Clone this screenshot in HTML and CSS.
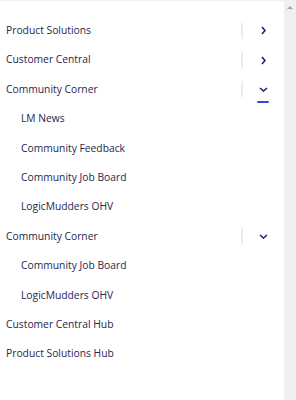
FILE: index.html
```html
<!DOCTYPE html>
<html lang="en">
<head>
    <meta charset="UTF-8">
    <meta name="viewport" content="width=device-width, initial-scale=1.0">
    <title>Menu</title>
    <link rel="stylesheet" href="styles.css">
</head>
<body>
    <div class="page">
        <nav class="menu">
            <div class="item">
                <a href="#" class="label">Product Solutions</a>
                <span class="divider"></span>
                <button class="toggle">
                    <svg width="5" height="9" viewBox="0 0 5 9"><path d="M1 1l3 3.5L1 8" fill="none" stroke="#1e2566" stroke-width="1.6"/></svg>
                </button>
            </div>
            <div class="item">
                <a href="#" class="label">Customer Central</a>
                <span class="divider"></span>
                <button class="toggle">
                    <svg width="5" height="9" viewBox="0 0 5 9"><path d="M1 1l3 3.5L1 8" fill="none" stroke="#1e2566" stroke-width="1.6"/></svg>
                </button>
            </div>
            <div class="item">
                <a href="#" class="label">Community Corner</a>
                <span class="divider"></span>
                <button class="toggle open">
                    <svg width="9" height="5" viewBox="0 0 9 5"><path d="M1 1l3.5 3L8 1" fill="none" stroke="#1e2566" stroke-width="1.6"/></svg>
                </button>
            </div>
            <a href="#" class="sub">LM News</a>
            <a href="#" class="sub">Community Feedback</a>
            <a href="#" class="sub">Community Job Board</a>
            <a href="#" class="sub">LogicMudders OHV</a>
            <div class="item">
                <a href="#" class="label">Community Corner</a>
                <span class="divider"></span>
                <button class="toggle">
                    <svg width="9" height="5" viewBox="0 0 9 5"><path d="M1 1l3.5 3L8 1" fill="none" stroke="#1e2566" stroke-width="1.6"/></svg>
                </button>
            </div>
            <a href="#" class="sub">Community Job Board</a>
            <a href="#" class="sub">LogicMudders OHV</a>
            <div class="item">
                <a href="#" class="label">Customer Central Hub</a>
            </div>
            <div class="item">
                <a href="#" class="label">Product Solutions Hub</a>
            </div>
        </nav>
        <div class="scrollbar">
            <span class="arrow"></span>
        </div>
    </div>
</body>
</html>
```

FILE: styles.css
```css
body {
    margin: 0;
    padding: 0;
    background-color: white;
    font-family: "Open Sans", Arial, sans-serif;
    font-size: 10.3px;
    color: #262650;
}
.page {
    display: flex;
    height: 400px;
    overflow: hidden;
}
.menu {
    flex: 1;
    border-top: 1px solid #f0f0f0;
    padding: 15px 1px 0 6px;
    display: flex;
    flex-direction: column;
}
.item {
    display: flex;
    align-items: center;
    height: 29.4px;
}
.label,
.sub {
    color: #262650;
    text-decoration: none;
    line-height: 29.4px;
}
.label {
    flex: 1;
}
.sub {
    padding-left: 15px;
}
.divider {
    width: 2px;
    height: 16px;
    background-color: #ececf1;
}
.toggle {
    width: 40px;
    height: 100%;
    border: none;
    background: none;
    padding: 0;
    display: flex;
    align-items: center;
    justify-content: center;
    position: relative;
    cursor: pointer;
}
.toggle.open::after {
    content: "";
    position: absolute;
    left: 14px;
    bottom: 1px;
    width: 12px;
    height: 2px;
    border-radius: 1px;
    background-color: #3b44d8;
}
.scrollbar {
    width: 12px;
    background-color: #f0f0f0;
    display: flex;
    justify-content: center;
}
.arrow {
    margin-top: 6px;
    width: 0;
    height: 0;
    border-left: 3px solid transparent;
    border-right: 3px solid transparent;
    border-bottom: 3px solid #a3a3a3;
}
```
